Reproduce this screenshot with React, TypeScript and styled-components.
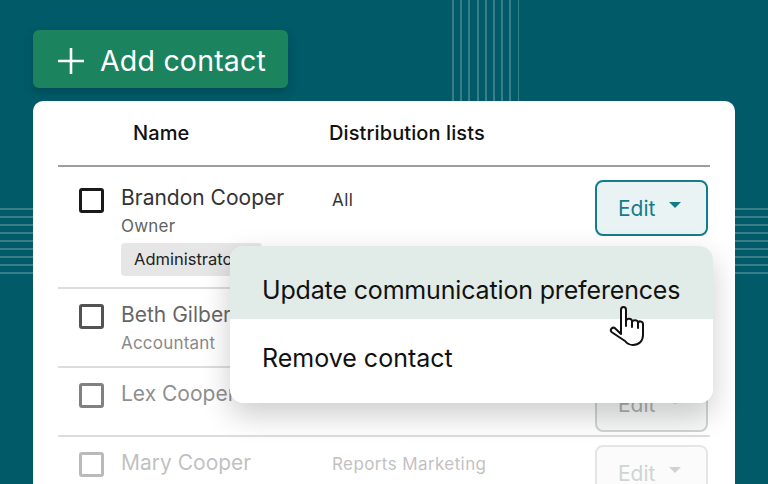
import React from 'react'
import styled, { createGlobalStyle } from 'styled-components'

const GlobalStyle = createGlobalStyle`
  html, body {
    margin: 0;
    padding: 0;
    background: #015a68;
  }
  * { box-sizing: border-box; }
`

const Page = styled.div`
  position: relative;
  width: 768px;
  height: 484px;
  overflow: hidden;
  padding: 30px 33px 0;
  background: #015a68;
  font-family: Inter, 'Liberation Sans', sans-serif;
`

const VerticalStripes = styled.div`
  position: absolute;
  top: 0;
  left: 452px;
  width: 67px;
  height: 110px;
  background: repeating-linear-gradient(90deg, rgba(255, 255, 255, 0.22) 0 2px, transparent 2px 8.2px);
`

const HorizontalStripes = styled.div`
  position: absolute;
  top: 208px;
  left: 0;
  width: 768px;
  height: 67px;
  background: repeating-linear-gradient(180deg, rgba(255, 255, 255, 0.22) 0 2px, transparent 2px 8px);
`

const AddButton = styled.div`
  position: relative;
  display: flex;
  align-items: center;
  gap: 16px;
  width: 255px;
  height: 58px;
  padding: 3px 0 0 25px;
  margin-bottom: 13px;
  border-radius: 6px;
  background: #1b845f;
  box-shadow: 0 4px 10px rgba(0, 40, 50, 0.3);
  color: #fff;
  font-size: 28.5px;
  letter-spacing: 0.2px;
`

const Card = styled.div`
  position: relative;
  width: 702px;
  height: 400px;
  padding: 0 25px;
  border-radius: 10px 10px 0 0;
  background: #fff;
`

const HeaderRow = styled.div`
  display: grid;
  grid-template-columns: 196px 1fr;
  height: 66px;
  padding: 20px 0 0 75px;
  border-bottom: 2px solid #9a9e9e;
  color: #111;
  font-size: 20px;
  font-weight: 500;
  letter-spacing: 0.1px;
  line-height: 24px;
`

const Row = styled.div<{ $height: number; $fade: number; $first?: boolean; $last?: boolean }>`
  display: grid;
  grid-template-columns: 42px 211px 1fr 113px;
  height: ${(p) => p.$height}px;
  padding: ${(p) => (p.$first ? 14 : 8)}px 2px 0 21px;
  border-bottom: ${(p) => (p.$last ? 'none' : '2px solid #dcdedd')};
  > * { opacity: ${(p) => p.$fade}; }
`

const Checkbox = styled.div`
  width: 25px;
  height: 25px;
  margin-top: 7px;
  border: 3px solid #1a1a1a;
  border-radius: 3px;
`

const Person = styled.div<{ $first?: boolean }>`
  display: flex;
  flex-direction: column;
  align-items: flex-start;
  margin-top: ${(p) => (p.$first ? 3 : 4)}px;
`

const PersonName = styled.div`
  color: #333;
  font-size: 21px;
  line-height: 28px;
  white-space: nowrap;
`

const PersonRole = styled.div`
  margin-top: 2px;
  color: #5f6363;
  font-size: 17px;
  letter-spacing: 0.2px;
  line-height: 24px;
`

const RoleTag = styled.div`
  width: 141px;
  height: 33px;
  margin-top: 5px;
  padding-left: 13px;
  border-radius: 4px;
  background: #e6e6e6;
  color: #222;
  font-size: 16.5px;
  line-height: 33px;
  white-space: nowrap;
  overflow: hidden;
`

const Lists = styled.div`
  margin-top: 7px;
  color: #333;
  font-size: 17px;
  letter-spacing: 0.4px;
  line-height: 24px;
`

const EditButton = styled.div<{ $active?: boolean }>`
  display: flex;
  align-items: center;
  gap: 14px;
  width: 113px;
  height: 56px;
  margin-top: ${(p) => (p.$active ? -1 : 0)}px;
  padding-left: 21px;
  border: 2px solid ${(p) => (p.$active ? '#137c8c' : '#a9b0b0')};
  border-radius: 8px;
  background: ${(p) => (p.$active ? '#eaf3f3' : '#f2f4f4')};
  color: ${(p) => (p.$active ? '#137c8c' : '#667070')};
  font-size: 21px;
`

const Caret = styled.span`
  width: 0;
  height: 0;
  margin-top: -6px;
  border-left: 6px solid transparent;
  border-right: 6px solid transparent;
  border-top: 6px solid currentColor;
`

const Menu = styled.div`
  position: absolute;
  top: 145px;
  left: 197px;
  width: 483px;
  height: 157px;
  overflow: hidden;
  border-radius: 14px;
  background: #fff;
  box-shadow: 0 12px 30px rgba(0, 0, 0, 0.2);
  color: #111;
  font-size: 25px;
`

const MenuItem = styled.div<{ $hover?: boolean }>`
  height: ${(p) => (p.$hover ? 73 : 84)}px;
  padding: ${(p) => (p.$hover ? '29px' : '24px')} 0 0 32px;
  background: ${(p) => (p.$hover ? '#e1ece8' : '#fff')};
  letter-spacing: ${(p) => (p.$hover ? -0.16 : 0)}px;
  line-height: 30px;
  white-space: nowrap;
`

const HandCursor = styled.svg`
  position: absolute;
  top: 305px;
  left: 609px;
  width: 37px;
  height: 44px;
`

const Plus = () => (
  <svg width="26" height="26" viewBox="0 0 26 26" fill="none" stroke="#fff" strokeWidth="2.6">
    <path d="M13 0v26M0 13h26" />
  </svg>
)

const people = [
  { name: 'Beth Gilbert', role: 'Accountant', lists: '', height: 79, fade: 0.75 },
  { name: 'Lex Cooper', role: '', lists: '', height: 69, fade: 0.55, edit: true },
  { name: 'Mary Cooper', role: '', lists: 'Reports Marketing', height: 60, fade: 0.3, edit: true, last: true },
]

const App = () => (
  <Page>
    <GlobalStyle />
    <VerticalStripes />
    <HorizontalStripes />
    <AddButton>
      <Plus />
      Add contact
    </AddButton>
    <Card>
      <HeaderRow>
        <div>Name</div>
        <div>Distribution lists</div>
      </HeaderRow>
      <Row $height={122} $fade={1} $first>
        <Checkbox />
        <Person $first>
          <PersonName>Brandon Cooper</PersonName>
          <PersonRole>Owner</PersonRole>
          <RoleTag>Administrator</RoleTag>
        </Person>
        <Lists>All</Lists>
        <EditButton $active>
          Edit
          <Caret />
        </EditButton>
      </Row>
      {people.map((p) => (
        <Row key={p.name} $height={p.height} $fade={p.fade} $last={p.last}>
          <Checkbox />
          <Person>
            <PersonName>{p.name}</PersonName>
            {p.role && <PersonRole>{p.role}</PersonRole>}
          </Person>
          <Lists>{p.lists}</Lists>
          {p.edit && (
            <EditButton>
              Edit
              <Caret />
            </EditButton>
          )}
        </Row>
      ))}
      <Menu>
        <MenuItem $hover>Update communication preferences</MenuItem>
        <MenuItem>Remove contact</MenuItem>
      </Menu>
    </Card>
    <HandCursor viewBox="0 0 37 44" fill="#fff" stroke="#111" strokeWidth="2" strokeLinejoin="round" strokeLinecap="round">
      <path d="M12 5c0-4 5-4 5 0v11c.5-3 5.500-3 6 0v1c.5-2.500 5.500-2.500 6 0v1c.5-2.500 5-2 5 1v11c0 6-4 10-10 10-4 0-6-1.500-8-4L2.500 27c-2-2.500 1-5.500 3.500-3.800L12 29z" />
      <path d="M17 16v5M23 17v5M29 18v5" fill="none" />
    </HandCursor>
  </Page>
)

export default App
